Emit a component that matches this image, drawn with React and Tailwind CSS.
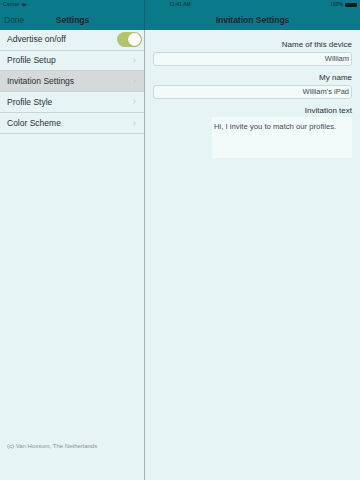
import { ChevronRight } from "lucide-react";

const rows = [
  { label: "Profile Setup" },
  { label: "Invitation Settings", active: true },
  { label: "Profile Style" },
  { label: "Color Scheme", last: true },
];

function Row({ label, active, last }) {
  return (
    <div className={`h-[20.7px] flex items-center ${active ? "bg-[#d6d9d9]" : ""}`}>
      <div className={`flex-1 h-full flex items-center pl-[7px] pr-[6px] ${last ? "" : "border-b border-[#c9d3d4]"}`}>
        <span className="flex-1 text-[8.5px] text-[#2a2f31]">{label}</span>
        <ChevronRight className="w-[7px] h-[7px] text-[#b9c1c3]" strokeWidth={2.5} />
      </div>
    </div>
  );
}

export default function App() {
  return (
    <div className="w-[360px] h-[480px] flex flex-col bg-[#e6f4f5] overflow-hidden" style={{ fontFamily: '"Liberation Sans", Arial, sans-serif' }}>
      {/* status bar + nav */}
      <div className="bg-[#0a7a8b] h-[30px] flex flex-col relative">
        <div className="absolute left-[144px] top-0 bottom-0 w-px bg-[#0b6472]" />
        <div className="h-[10px] flex items-center px-[3px] text-[5px] font-bold text-[#0d3f48]">
          <div className="flex-1 flex items-center gap-[2px]">
            Carrier
            <svg width="6" height="4" viewBox="0 0 6 4"><path d="M0 1.2 Q3 -0.8 6 1.2 L3 4 Z" fill="#0d3f48" /></svg>
          </div>
          <div className="flex-1 text-center">11:41 AM</div>
          <div className="flex-1 flex justify-end items-center gap-[2px]">
            100%
            <div className="w-[12px] h-[4px] bg-[#0d1a1e] rounded-[1px]" />
          </div>
        </div>
        <div className="flex-1 flex">
          <div className="w-[145px] flex items-center relative">
            <span className="pl-[4px] text-[8.5px] text-[#0d3f48]">Done</span>
            <span className="absolute left-0 right-0 text-center text-[8.5px] font-semibold text-[#13262b] pointer-events-none">Settings</span>
          </div>
          <div className="flex-1 flex items-center justify-center text-[8.5px] font-semibold text-[#13262b]">Invitation Settings</div>
        </div>
      </div>

      <div className="flex-1 flex">
        {/* left panel */}
        <div className="w-[145px] border-r border-[#a6afb1] flex flex-col">
          <div className="h-[20.7px] flex items-center">
            <div className="flex-1 h-full flex items-center pl-[7px] pr-[2px] border-b border-[#c9d3d4]">
              <span className="flex-1 text-[8.5px] text-[#2a2f31]">Advertise on/off</span>
              <div className="w-[25px] h-[15px] rounded-full bg-[#b3c46b] flex justify-end items-center p-[1px]">
                <div className="w-[13px] h-[13px] rounded-full bg-white shadow-[0_0.5px_1px_rgba(0,0,0,0.25)]" />
              </div>
            </div>
          </div>
          {rows.map((r) => (
            <Row key={r.label} {...r} />
          ))}
          <div className="border-b border-[#c9d3d4]" />
          <div className="flex-1" />
          <div className="pl-[7px] pb-[29px] text-[6px] text-[#8b9395]">(c) Van Hoxsum, The Netherlands</div>
        </div>

        {/* right panel */}
        <div className="flex-1 flex flex-col pl-[8px] pr-[8px] pt-[10px] text-[#2a2f31]">
          <div className="text-right text-[8px] leading-[10px]">Name of this device</div>
          <div className="mt-[2px] h-[14px] rounded-[3px] border border-[#cdd8da] bg-[#f3fafa] flex items-center justify-end px-[2px] text-[7.5px] text-[#3d4c52]">William</div>
          <div className="mt-[7px] text-right text-[8px] leading-[10px]">My name</div>
          <div className="mt-[2px] h-[14px] rounded-[3px] border border-[#cdd8da] bg-[#f3fafa] flex items-center justify-end px-[2px] text-[7.5px] text-[#3d4c52]">William's iPad</div>
          <div className="mt-[7px] text-right text-[8px] leading-[10px]">Invitation text</div>
          <div className="mt-[1px] self-end w-[140px] h-[41px] bg-[#f3fafa] px-[2px] pt-[4px] text-[7.7px] text-[#3d4c52]">Hi, I invite you to match our profiles.</div>
        </div>
      </div>
    </div>
  );
}
